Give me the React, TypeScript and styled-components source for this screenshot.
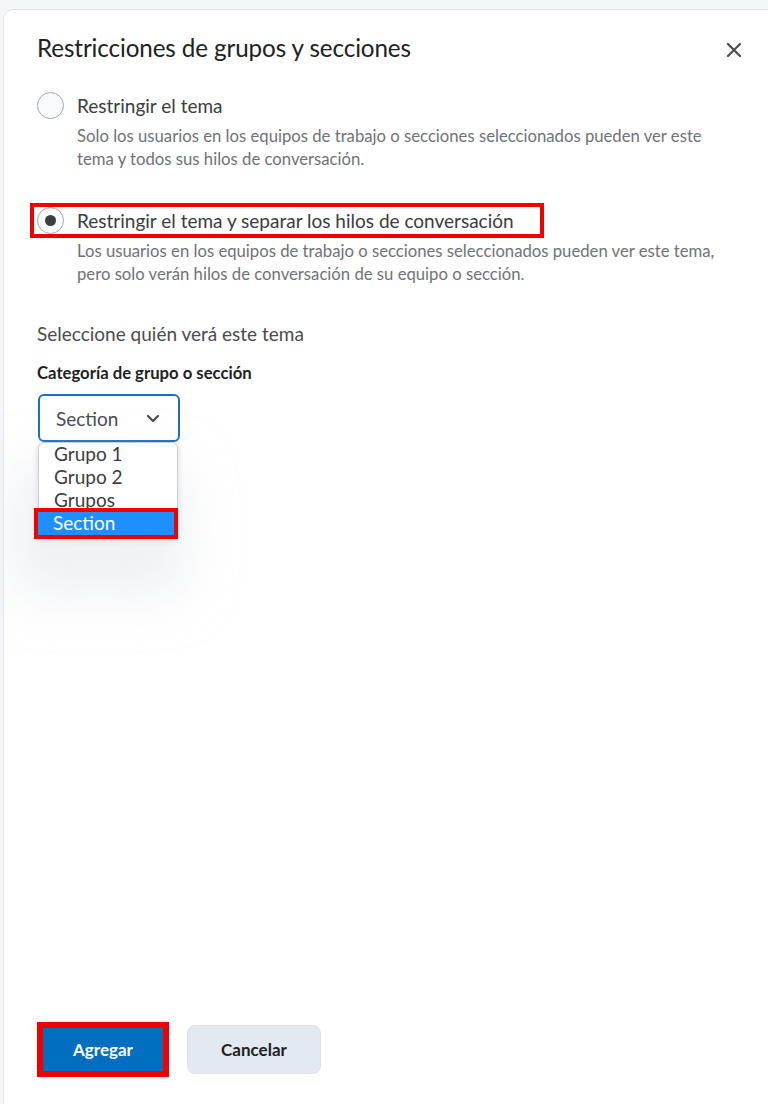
import React from "react";
import styled, { createGlobalStyle } from "styled-components";

const GlobalStyle = createGlobalStyle`
  html, body {
    margin: 0;
    padding: 0;
    background: #f5f6f8;
    font-family: Lato, "Noto Sans", sans-serif;
  }
`;

type Option = { label: string; hint: string; checked: boolean; marked: boolean };

const options: Option[] = [
  {
    label: "Restringir el tema",
    hint: "Solo los usuarios en los equipos de trabajo o secciones seleccionados pueden ver este tema y todos sus hilos de conversación.",
    checked: false,
    marked: false,
  },
  {
    label: "Restringir el tema y separar los hilos de conversación",
    hint: "Los usuarios en los equipos de trabajo o secciones seleccionados pueden ver este tema, pero solo verán hilos de conversación de su equipo o sección.",
    checked: true,
    marked: true,
  },
];

const categories = ["Grupo 1", "Grupo 2", "Grupos", "Section"];

export default function App() {
  return (
    <>
      <GlobalStyle />
      <Page>
        <Dialog>
          <Header>
            <Title>Restricciones de grupos y secciones</Title>
            <CloseButton aria-label="Cerrar">
              <svg width="16" height="16" viewBox="0 0 16 16">
                <path d="M2 2 L14 14 M14 2 L2 14" stroke="#494c4e" strokeWidth="2.2" strokeLinecap="round" />
              </svg>
            </CloseButton>
          </Header>

          <Options>
            {options.map((o) => (
              <OptionBlock key={o.label}>
                <OptionRow $marked={o.marked}>
                  <Radio $checked={o.checked} />
                  <OptionLabel>{o.label}</OptionLabel>
                </OptionRow>
                <Hint>{o.hint}</Hint>
              </OptionBlock>
            ))}
          </Options>

          <Subheading>Seleccione quién verá este tema</Subheading>
          <FieldLabel>Categoría de grupo o sección</FieldLabel>

          <SelectWrap>
            <SelectBox>
              <span>Section</span>
              <svg width="14" height="9" viewBox="0 0 14 9">
                <path d="M2 2 L7 7 L12 2" fill="none" stroke="#494c4e" strokeWidth="2.2" strokeLinecap="round" strokeLinejoin="round" />
              </svg>
            </SelectBox>
            <ListBox>
              {categories.map((c) => (
                <ListItem key={c} $active={c === "Section"}>
                  {c}
                </ListItem>
              ))}
            </ListBox>
          </SelectWrap>

          <Spacer />

          <Footer>
            <PrimaryButton>Agregar</PrimaryButton>
            <SecondaryButton>Cancelar</SecondaryButton>
          </Footer>
        </Dialog>
      </Page>
    </>
  );
}

const Page = styled.div`
  width: 768px;
  height: 1104px;
  padding: 9px 0 0 3px;
  box-sizing: border-box;
  overflow: hidden;
`;

const Dialog = styled.div`
  height: 100%;
  background: #fff;
  border-left: 1px solid #e3e6ea;
  border-top: 1px solid #dfe2e6;
  border-radius: 10px 0 0 0;
  padding: 20px 0 27px 33px;
  box-sizing: border-box;
  display: flex;
  flex-direction: column;
`;

const Header = styled.div`
  display: flex;
  align-items: center;
  justify-content: space-between;
  padding-right: 26px;
  height: 34px;
`;

const Title = styled.h1`
  margin: 0;
  font-size: 24.2px;
  font-weight: 400;
  color: #202122;
  letter-spacing: -0.1px;
`;

const CloseButton = styled.button`
  border: none;
  background: none;
  padding: 0;
  display: flex;
  margin-top: 6px;
`;

const Options = styled.div`
  margin-top: 28px;
  display: flex;
  flex-direction: column;
  gap: 36px;
`;

const OptionBlock = styled.div`
  display: flex;
  flex-direction: column;
`;

const OptionRow = styled.div<{ $marked: boolean }>`
  display: flex;
  align-items: center;
  gap: 13px;
  align-self: flex-start;
  margin-left: ${(p) => (p.$marked ? "-7px" : "0")};
  padding: ${(p) => (p.$marked ? "0 26px 0 3px" : "0")};
  border: ${(p) => (p.$marked ? "4px solid #f20000" : "none")};
  margin-top: ${(p) => (p.$marked ? "-4px" : "0")};
  margin-bottom: ${(p) => (p.$marked ? "-4px" : "0")};
`;

const Radio = styled.span<{ $checked: boolean }>`
  width: 27px;
  height: 27px;
  border-radius: 50%;
  border: 1px solid #a4a8ad;
  background: #f9fafb;
  box-sizing: border-box;
  display: flex;
  align-items: center;
  justify-content: center;
  &::after {
    content: "";
    width: 11px;
    height: 11px;
    border-radius: 50%;
    background: #3b3d40;
    display: ${(p) => (p.$checked ? "block" : "none")};
  }
`;

const OptionLabel = styled.span`
  font-size: 19px;
  color: #3a3c3e;
  line-height: 26px;
`;

const Hint = styled.p`
  margin: 6px 0 0 40px;
  max-width: 650px;
  font-size: 16.7px;
  line-height: 23px;
  color: #6e7376;
`;

const Subheading = styled.div`
  margin-top: 36px;
  font-size: 19px;
  color: #494c4e;
`;

const FieldLabel = styled.div`
  margin-top: 18px;
  font-size: 16.7px;
  font-weight: 700;
  color: #202122;
`;

const SelectWrap = styled.div`
  margin-top: 11px;
  margin-left: 1px;
  width: 142px;
  display: flex;
  flex-direction: column;
`;

const SelectBox = styled.div`
  height: 48px;
  box-sizing: border-box;
  border: 2px solid #1a6fc2;
  border-radius: 6px;
  display: flex;
  align-items: center;
  justify-content: space-between;
  padding: 0 18px 0 16px;
  font-size: 19px;
  color: #494c4e;
`;

const ListBox = styled.div`
  margin-top: 0;
  width: 140px;
  box-sizing: border-box;
  border: 1px solid #c9ccd0;
  border-radius: 6px;
  background: #fff;
  box-shadow: -10px 40px 50px 16px rgba(226, 229, 235, 0.55), 0 2px 6px rgba(0, 0, 0, 0.15);
`;

const ListItem = styled.div<{ $active: boolean }>`
  height: 23px;
  font-size: 19px;
  line-height: 22px;
  padding-left: 15px;
  color: ${(p) => (p.$active ? "#fff" : "#3a3c3e")};
  background: ${(p) => (p.$active ? "#1e8fff" : "transparent")};
  outline: ${(p) => (p.$active ? "4px solid #f20000" : "none")};
  margin: ${(p) => (p.$active ? "0 3px 3px -1px" : "0")};
`;

const Spacer = styled.div`
  flex: 1;
`;

const Footer = styled.div`
  display: flex;
  align-items: center;
  gap: 18px;
`;

const PrimaryButton = styled.button`
  width: 132px;
  height: 55px;
  box-sizing: border-box;
  border: 6px solid #f20000;
  background: #006fbf;
  color: #fff;
  font-family: Lato, "Noto Sans", sans-serif;
  font-size: 17px;
  font-weight: 700;
`;

const SecondaryButton = styled.button`
  width: 134px;
  height: 49px;
  border: 1px solid #dde3ea;
  border-radius: 8px;
  background: #e3e9f1;
  color: #202122;
  font-family: Lato, "Noto Sans", sans-serif;
  font-size: 17px;
  font-weight: 700;
`;
